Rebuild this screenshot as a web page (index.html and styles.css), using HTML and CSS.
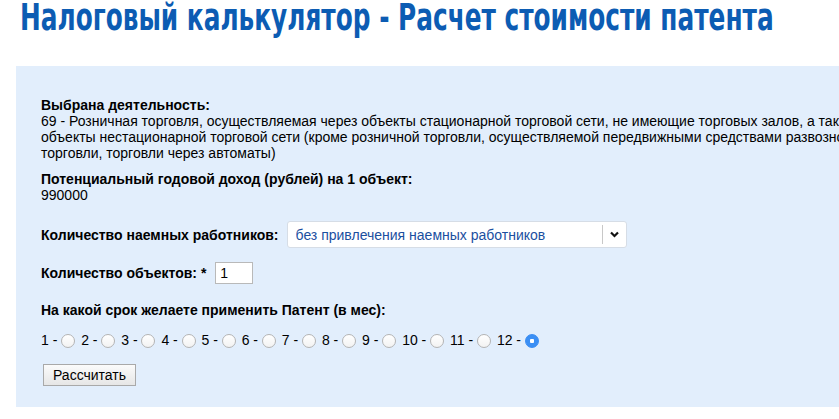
FILE: index.html
```html
<!DOCTYPE html>
<html lang="ru">
<head>
  <meta charset="UTF-8">
  <meta name="viewport" content="width=device-width, initial-scale=1.0">
  <title>Налоговый калькулятор - Расчет стоимости патента</title>
  <link rel="stylesheet" href="styles.css">
</head>
<body>
  <h1 class="page-title">Налоговый калькулятор - Расчет стоимости патента</h1>

  <form class="calc" onsubmit="return false;">
    <div class="block">
      <b>Выбрана деятельность:</b><br>
      69 - Розничная торговля, осуществляемая через объекты стационарной торговой сети, не имеющие торговых залов, а также через объекты нестационарной торговой сети (кроме розничной торговли, осуществляемой передвижными средствами развозной и разносной торговли, торговли через автоматы)
    </div>

    <div class="block income">
      <b>Потенциальный годовой доход (рублей) на 1 объект:</b><br>
      990000
    </div>

    <div class="row workers">
      <label for="workers">Количество наемных работников:</label>
      <div class="select-wrap">
        <select id="workers">
          <option>без привлечения наемных работников</option>
          <option>до 5 человек</option>
          <option>от 6 до 15 человек</option>
        </select>
        <span class="select-arrow">
          <svg width="9" height="7" viewBox="0 0 9 7"><path d="M1 1.5 L4.5 5 L8 1.5" fill="none" stroke="#111" stroke-width="2.2"/></svg>
        </span>
      </div>
    </div>

    <div class="row objects">
      <label for="objects">Количество объектов: *</label>
      <input type="text" id="objects" value="1">
    </div>

    <div class="block term-title"><b>На какой срок желаете применить Патент (в мес):</b></div>

    <div class="months">
      <label>1 - <input type="radio" name="term" value="1"></label>
      <label>2 - <input type="radio" name="term" value="2"></label>
      <label>3 - <input type="radio" name="term" value="3"></label>
      <label>4 - <input type="radio" name="term" value="4"></label>
      <label>5 - <input type="radio" name="term" value="5"></label>
      <label>6 - <input type="radio" name="term" value="6"></label>
      <label>7 - <input type="radio" name="term" value="7"></label>
      <label>8 - <input type="radio" name="term" value="8"></label>
      <label>9 - <input type="radio" name="term" value="9"></label>
      <label>10 - <input type="radio" name="term" value="10"></label>
      <label>11 - <input type="radio" name="term" value="11"></label>
      <label>12 - <input type="radio" name="term" value="12" checked></label>
    </div>

    <button class="btn" type="submit">Рассчитать</button>
  </form>
</body>
</html>
```

FILE: styles.css
```css
body {
  margin: 0;
  font-family: "Liberation Sans", Arial, sans-serif;
  font-size: 14px;
  line-height: 16px;
  color: #000;
  background: #fff;
  overflow: hidden;
}

.page-title {
  margin: 0;
  padding: 0 0 0 20px;
  font-family: "DejaVu Sans Condensed", "DejaVu Sans", sans-serif;
  font-stretch: condensed;
  font-size: 37px;
  line-height: 36px;
  font-weight: bold;
  color: #0c5cb3;
  white-space: nowrap;
  transform: scaleX(0.745);
  transform-origin: 20px 0;
}

/* блок калькулятора */
.calc {
  width: 905px;
  margin: 30px 0 0 16px;
  padding: 31px 25px 21px;
  background: #e2eefc;
}

.block b,
.row label {
  font-weight: bold;
}

.income {
  margin-top: 10px;
}

.row {
  display: flex;
  align-items: center;
}

.workers {
  margin-top: 18px;
}

.workers label {
  margin-right: 8px;
}

.select-wrap {
  position: relative;
}

.select-wrap select {
  appearance: none;
  -webkit-appearance: none;
  display: block;
  width: 340px;
  height: 27px;
  padding: 0 30px 0 8px;
  border: 1px solid #d6dde6;
  border-radius: 3px;
  background: #fff;
  color: #1b4f9f;
  font-family: inherit;
  font-size: 14px;
}

.select-arrow {
  position: absolute;
  top: 4px;
  right: 8px;
  height: 19px;
  padding-left: 7px;
  border-left: 1px solid #c8c8c8;
  display: flex;
  align-items: center;
  pointer-events: none;
}

.objects {
  margin-top: 14px;
}

.objects label {
  margin-right: 9px;
}

.objects input {
  width: 38px;
  height: 22px;
  box-sizing: border-box;
  padding: 0 4px;
  border: 1px solid #b9b9b9;
  background: #fff;
  font-family: inherit;
  font-size: 14px;
}

.term-title {
  margin-top: 18px;
}

.months {
  margin-top: 14px;
  white-space: nowrap;
}

.months input {
  appearance: none;
  -webkit-appearance: none;
  width: 14px;
  height: 14px;
  margin: 0 2px 0 0;
  box-sizing: border-box;
  border: 1px solid #b4b4b4;
  border-radius: 50%;
  background: linear-gradient(#fff, #f2f2f2);
  vertical-align: -3px;
}

.months input:checked {
  border-color: #3a8cf2;
  background: radial-gradient(circle, #fff 0 2px, #3b8ff4 2.5px);
}

.btn {
  margin-top: 16px;
  margin-left: 2px;
  padding: 1px 9px;
  height: 22px;
  border: 1px solid #a9a9a9;
  border-radius: 0;
  background: linear-gradient(#fbfbfb, #e6e6e6);
  font-family: inherit;
  font-size: 14px;
  color: #000;
}
```
